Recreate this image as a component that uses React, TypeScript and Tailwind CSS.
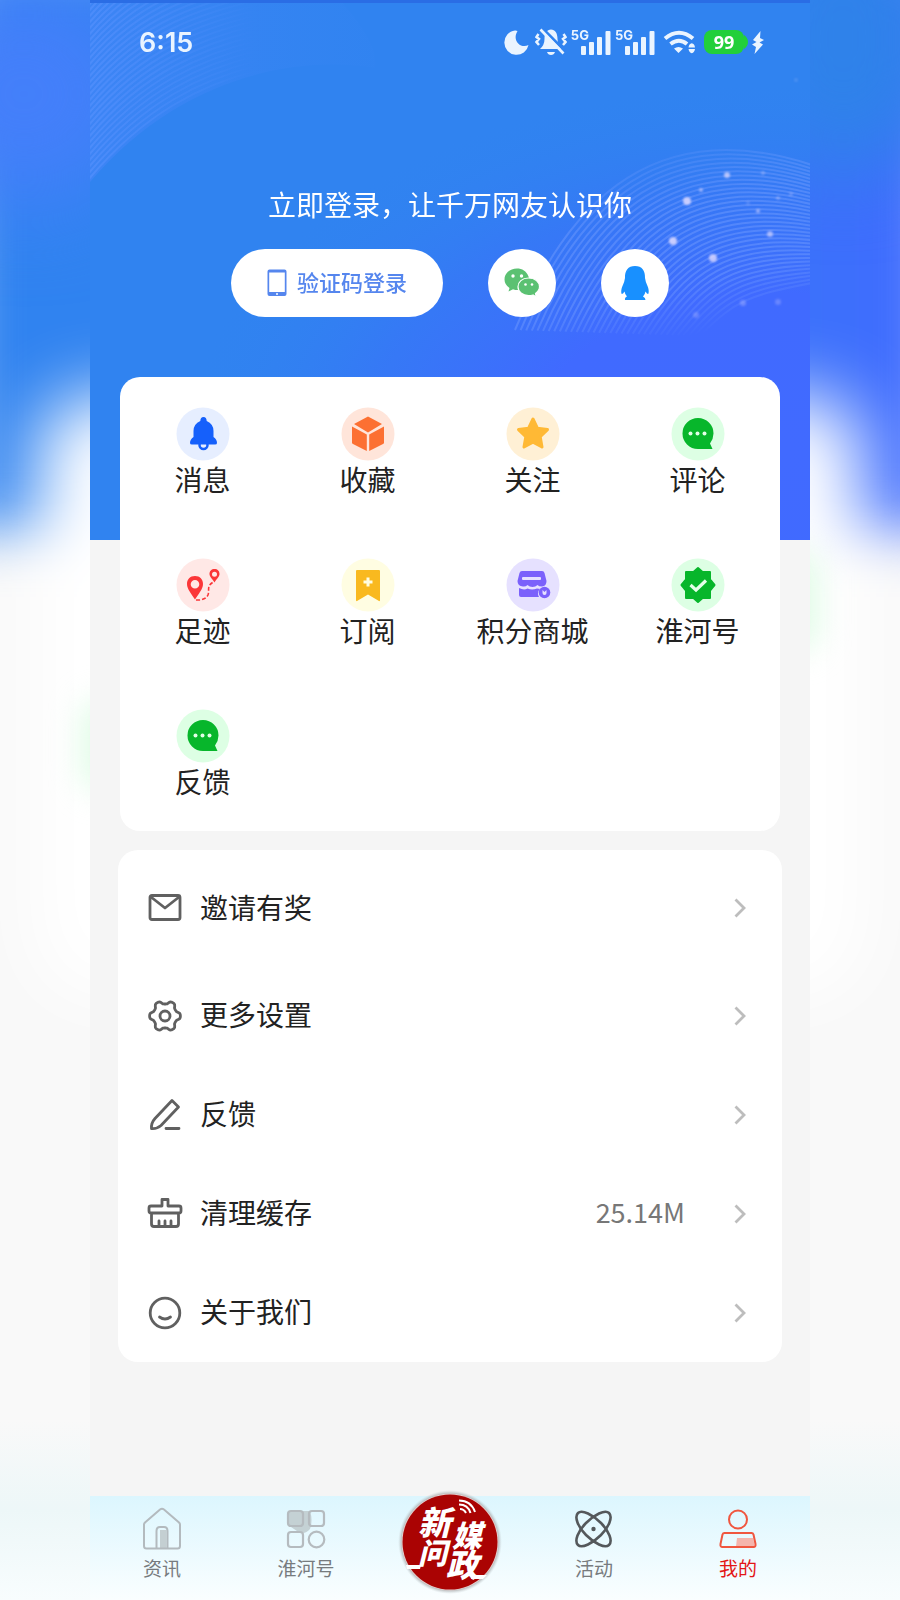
import type { ReactNode } from 'react';

const leftArcs = Array.from({ length: 30 }, (_, i) => i);
const rightArcs = Array.from({ length: 34 }, (_, i) => i / 33);
const sparks = [
  [727, 175, 3, 0.75], [687, 201, 4, 0.85], [701, 190, 2, 0.6], [673, 241, 4, 0.85], [713, 258, 4, 0.8],
  [758, 211, 2, 0.6], [770, 234, 3, 0.65], [763, 173, 2, 0.35], [778, 198, 2, 0.35], [791, 194, 2, 0.3],
  [743, 303, 3, 0.3], [778, 302, 3, 0.25], [696, 315, 3, 0.25], [748, 203, 2, 0.2], [796, 80, 2, 0.15],
];

const gearPath =
  Array.from({ length: 72 }, (_, i) => {
    const a = (i * Math.PI) / 36;
    const wave = Math.tanh(1.8 * Math.cos(6 * a)) / Math.tanh(1.8);
    const r = 13.7 + 1.7 * wave;
    return `${i ? 'L' : 'M'}${(18 + r * Math.cos(a)).toFixed(2)} ${(18 + r * Math.sin(a)).toFixed(2)}`;
  }).join('') + 'Z';

function HeaderArt() {
  return (
    <svg className="absolute inset-0 h-full w-full" viewBox="0 0 720 540" preserveAspectRatio="none" aria-hidden="true">
      <defs>
        <radialGradient id="glow" gradientUnits="userSpaceOnUse" cx="690" cy="450" r="600" gradientTransform="translate(690 450) scale(1 0.62) translate(-690 -450)">
          <stop offset="0" stopColor="#416aff" />
          <stop offset="0.42" stopColor="#406aff" />
          <stop offset="0.7" stopColor="#3776f7" stopOpacity="0.8" />
          <stop offset="1" stopColor="#3083f0" stopOpacity="0" />
        </radialGradient>
        <linearGradient id="fadeL" x1="0" y1="0" x2="1" y2="0">
          <stop offset="0" stopColor="#fff" />
          <stop offset="1" stopColor="#fff" stopOpacity="0" />
        </linearGradient>
        <linearGradient id="fadeR" gradientUnits="userSpaceOnUse" x1="560" y1="130" x2="610" y2="335">
          <stop offset="0" stopColor="#fff" stopOpacity="0.15" />
          <stop offset="0.4" stopColor="#fff" stopOpacity="0.8" />
          <stop offset="0.75" stopColor="#fff" stopOpacity="0.8" />
          <stop offset="1" stopColor="#fff" stopOpacity="0" />
        </linearGradient>
        <linearGradient id="fillL" x1="0" y1="0" x2="1" y2="0">
          <stop offset="0" stopColor="#4a86fb" />
          <stop offset="1" stopColor="#3a86f4" stopOpacity="0.2" />
        </linearGradient>
        <mask id="maskL"><rect width="170" height="190" fill="url(#fadeL)" /></mask>
        <mask id="maskR"><rect width="720" height="540" fill="url(#fadeR)" /></mask>
        <filter id="soft"><feGaussianBlur stdDeviation="1" /></filter>
      </defs>
      <rect width="720" height="540" fill="#3083f0" />
      <rect width="720" height="540" fill="url(#glow)" />
      <path d="M0 0H250Q290 45 285 68C210 55 90 75 0 182Z" fill="url(#fillL)" opacity="0.5" />
      <g mask="url(#maskL)" fill="none" stroke="#5c94ff" strokeWidth="2" opacity="0.5">
        {leftArcs.map((i) => (
          <path key={i} d={`M-2 ${180 - i * 6}C50 ${118 - i * 6} 110 ${80 - i * 5} 190 ${66 - i * 5}`} />
        ))}
      </g>
      <g mask="url(#maskR)" fill="none" stroke="#7ba2ff" strokeWidth="2" opacity="0.5">
        {rightArcs.map((t) => (
          <path
            key={t}
            d={`M${425 + 185 * t} ${330 + 6 * t}C${480 + 165 * t} ${195 + 105 * t} ${570 + 90 * t} ${115 + 180 * t} 722 ${165 + 118 * t}`}
          />
        ))}
      </g>
      <g fill="#e2dcff" filter="url(#soft)">
        {sparks.map(([x, y, r, o]) => <circle key={`${x}-${y}`} cx={x - 90} cy={y} r={r} opacity={o} />)}
      </g>
      <rect width="720" height="3" fill="#2a6de5" />
    </svg>
  );
}

function Signal() {
  return (
    <svg width="30" height="24" viewBox="0 0 30 24" className="mt-0.5" fill="#eaf4ff" aria-hidden="true">
      <rect x="0" y="15" width="5" height="9" rx="1" />
      <rect x="8" y="11" width="5" height="13" rx="1" />
      <rect x="16" y="6" width="5" height="18" rx="1" />
      <rect x="24.500" y="0" width="5" height="24" rx="1" />
    </svg>
  );
}

function StatusBar() {
  return (
    <div className="flex h-[84px] items-center justify-between pr-[46px] pl-[49px] font-['Inter',sans-serif]">
      <span className="pt-0.5 text-[27px] font-semibold text-[#eaf4ff]">6:15</span>
      <div className="flex items-center">
        <svg width="25" height="25" viewBox="0 0 25 25" aria-hidden="true">
          <path d="M11 0.500A12.200 12.200 0 1 0 24.500 15C17 19 7.500 11 13.500 1Q12 .3 11 .5Z" fill="#eaf4ff" />
        </svg>
        <svg width="32" height="28" viewBox="0 0 32 28" className="ml-1.5" aria-hidden="true">
          <path d="M5 21Q9.500 17 9.500 11C9.500 5 12 1.500 16 1.500S22.500 5 22.500 11Q22.500 17 27 21ZM12 24H20Q19 27 16 27T12 24Z" fill="#eaf4ff" />
          <path d="M3.500 6L1.500 9L4 11L1.500 14L4 17M28.500 6L30.500 9L28 11L30.500 14L28 17" stroke="#eaf4ff" strokeWidth="2.500" fill="none" />
          <path d="M8 1L30 23" stroke="#3083f0" strokeWidth="3" />
          <path d="M5.500 1.500L28.500 25.500" stroke="#eaf4ff" strokeWidth="2.600" />
        </svg>
        <div className="ml-1 flex">
          <span className="-mr-2 text-[13px] leading-3 font-bold text-[#eaf4ff]">5G</span>
          <Signal />
        </div>
        <div className="ml-1 flex">
          <span className="-mr-2 text-[13px] leading-3 font-bold text-[#eaf4ff]">5G</span>
          <Signal />
        </div>
        <svg width="33" height="24" viewBox="0 0 33 24" className="ml-2" fill="none" aria-hidden="true">
          <path d="M2 8.500Q16 -3 30 8.500M7.500 14Q16 7.500 24 14" stroke="#eaf4ff" strokeWidth="4" />
          <path d="M11 18.500Q15.500 15.500 20 18.500L15.500 23ZM25.500 17.500Q26 13.500 28.800 13.200Q31.500 13.500 32 17.500ZM25.500 19H32Q31.500 22.500 28.800 23.200Q26 22.500 25.500 19Z" fill="#eaf4ff" />
        </svg>
        <span className="ml-2 flex h-6 w-[40px] items-center justify-center rounded-[8px] bg-[#22cf3a] font-['Noto_Sans',sans-serif] text-[18px] font-bold text-white">99</span>
        <svg width="4" height="14" viewBox="0 0 4 14" aria-hidden="true"><path d="M0 0Q4 3 4 7T0 14Z" fill="#22cf3a" /></svg>
        <svg width="12" height="23" viewBox="0 0 12 23" className="ml-1" aria-hidden="true">
          <path d="M8.500 0L1 9L4.500 11L0 13.500L4 16L2.500 23L11 13.500L7.500 11.500L12 9L8 7Z" fill="#eaf4ff" />
        </svg>
      </div>
    </div>
  );
}

function Wechat() {
  return (
    <svg width="36" height="30" viewBox="0 0 36 30" aria-hidden="true">
      <path d="M13 0.500C5.500 .5 .5 5.500 .5 11.500Q.5 16.500 5.500 20L4.500 23.500L9 21.200Q12 22.300 15 22C26 21 26.500 14 24.500 8.500C22.500 3 18 .5 13 .5Z" fill="#5bc172" />
      <path d="M24.500 10C18 10 14 14 14 18.800S18.500 27.600 24.500 27.600Q27 27.600 29 27L32.300 29L31.500 25.500Q35.500 22.500 35.500 18.800C35.500 14 31 10 24.500 10Z" fill="#5bc172" stroke="#fff" strokeWidth="1.200" />
      <g fill="#fff"><circle cx="9" cy="8" r="1.700" /><circle cx="17.500" cy="8" r="1.700" /><circle cx="21.500" cy="16.500" r="1.300" /><circle cx="28" cy="16.500" r="1.300" /></g>
    </svg>
  );
}

function Penguin() {
  return (
    <svg width="28" height="34" viewBox="0 0 28 34" aria-hidden="true">
      <path d="M14 0C7 0 3.700 4.500 4 12Q3.500 16 1.500 20C0 23.500 0 27 .8 28Q2 28 3.500 25.500Q4 28.500 6 30.500Q3.500 31.500 4 34H24.500Q24.500 31.500 22 30.500Q24 28.500 24.500 25.500Q26 28 27.200 28C28 27 28 23.500 26.500 20Q24.500 16 24 12C24.300 4.500 21 0 14 0Z" fill="#1890ff" />
    </svg>
  );
}

const chat = (
  <>
    <path d="M27 11A15.500 15.500 0 1 0 27 42H41.500L39 36.500Q42.500 31.500 42.500 26.500A15.500 15.500 0 0 0 27 11Z" fill="#07b62b" />
    <g fill="#e2ffe8"><circle cx="19.500" cy="26.500" r="2" /><circle cx="26.500" cy="26.500" r="2" /><circle cx="33.500" cy="26.500" r="2" /></g>
  </>
);

const services: { label: string; tint: string; art: ReactNode }[] = [
  {
    label: '消息', tint: '#e6eeff',
    art: (
      <>
        <circle cx="27.500" cy="38" r="4" fill="none" stroke="#1560fb" strokeWidth="2.500" />
        <path d="M27.500 10Q30.500 10 30.700 14Q37.500 17 37.500 24V30Q41 32.500 41 36Q41 37.500 39 37.500H16Q14 37.500 14 36Q14 32.500 17.500 30V24Q17.500 17 24.300 14Q24.500 10 27.500 10Z" fill="#1560fb" />
      </>
    ),
  },
  {
    label: '收藏', tint: '#ffe5da',
    art: <path d="M27 9.500L41 17L27 25.500L13 17ZM11 19.500L25.800 27.500V44L12 37Q11 36.500 11 35.500ZM43 19.500L28.200 27.500V44L42 37Q43 36.500 43 35.500Z" fill="#fc7032" />,
  },
  {
    label: '关注', tint: '#fff0d5',
    art: <path d="M27 12L31.400 21.200L41.500 22.600L34.200 29.800L36 40L27 35.200L18 40L19.800 29.800L12.500 22.600L22.600 21.200Z" fill="#ffb935" stroke="#ffb935" strokeWidth="3" strokeLinejoin="round" />,
  },
  { label: '评论', tint: '#ddffe4', art: chat },
  {
    label: '足迹', tint: '#ffe8e6',
    art: (
      <g fill="#fb3638">
        <path fillRule="evenodd" d="M19 18C14 18 11 21.500 11 26C11 31 15.500 36 19 41.500C22.500 36 27 31 27 26C27 21.500 24 18 19 18ZM19 22A4.300 4.300 0 1 1 19 30.600A4.300 4.300 0 0 1 19 22Z" />
        <path fillRule="evenodd" d="M38.500 11C35.500 11 33.500 13 33.500 16C33.500 19 36.500 21 38.500 24.500C40.500 21 43.500 19 43.500 16C43.500 13 41.500 11 38.500 11ZM38.500 13.800A2.500 2.500 0 1 1 38.500 18.800A2.500 2.500 0 0 1 38.500 13.800Z" />
        <path d="M20 42C27 42.500 32 40 32.500 35C33 31 31 27.500 37.500 24" fill="none" stroke="#fb3638" strokeWidth="1.600" strokeDasharray="4 2" />
      </g>
    ),
  },
  {
    label: '订阅', tint: '#fffde2',
    art: (
      <>
        <path d="M16 12H38Q39 12 39 13V42Q39 43.500 38 43L27 36.500L16 43Q15 43.500 15 42V13Q15 12 16 12Z" fill="#f9b91f" />
        <path d="M27 19.500V28.500M22.500 24H31.500" stroke="#fffde2" strokeWidth="3" />
      </>
    ),
  },
  {
    label: '积分商城', tint: '#e6e1ff',
    art: (
      <>
        <path d="M16 13H36Q38 13 38.500 15L40.500 23Q40.500 28 36 28.500Q33 28.500 31.500 27Q29.500 29 26.500 29Q23.500 29 21.500 27Q19.500 29 17 28.500Q11.500 28 11.500 23L13.500 15Q14 13 16 13ZM13 30Q18 32.500 21.500 30.500Q26 32.500 31 30.500L34 31Q30.500 34.500 33 39H15Q13 39 13 37Z" fill="#7b61fb" />
        <rect x="16" y="19" width="19" height="3" rx="1" fill="#e6e1ff" />
        <circle cx="38.500" cy="34.500" r="5.800" fill="#7b61fb" />
        <path d="M36.500 32V35Q36.500 37 38.500 37T40.500 35V32L38.500 34Z" fill="#e6e1ff" />
      </>
    ),
  },
  {
    label: '淮河号', tint: '#ddffe4',
    art: (
      <>
        <path d="M27 10L31.500 14H39V21.500L43.500 27L39 32.500V40H31.500L27 44L22.500 40H15V32.500L10.500 27L15 21.500V14H22.500Z" fill="#07b62b" stroke="#07b62b" strokeWidth="2" strokeLinejoin="round" />
        <path d="M19.500 27L25 32L35 22.500" fill="none" stroke="#e4ffe9" strokeWidth="3.200" />
      </>
    ),
  },
  { label: '反馈', tint: '#ddffe4', art: chat },
];

const settings: { label: string; value?: string; art: ReactNode }[] = [
  {
    label: '邀请有奖',
    art: <path d="M5 5.500H31Q33 5.500 33 7.500V27.500Q33 29.500 31 29.500H5Q3 29.500 3 27.500V7.500Q3 5.500 5 5.500ZM4 7L18 18L32 7" />,
  },
  {
    label: '更多设置',
    art: (
      <>
        <circle cx="18" cy="18" r="5" />
        <path d={gearPath} />
      </>
    ),
  },
  {
    label: '反馈',
    art: <path d="M25 3.500L31.500 10L14 28.500Q10 32 4.500 31.500Q4 26 8 21.500ZM19 31.500H32" />,
  },
  {
    label: '清理缓存', value: '25.14M',
    art: <path d="M15 10V3.500H21V10H32Q34 10 34 12V15Q34 17 32 17H4Q2 17 2 15V12Q2 10 4 10ZM4.500 17V28Q4.500 30.500 7 30.500H29Q31.500 30.500 31.500 28V17M12 30V25M18 30V25M24 30V25" />,
  },
  {
    label: '关于我们',
    art: (
      <>
        <circle cx="18" cy="18" r="14.800" />
        <path d="M12.500 22Q18 26 23.500 22" />
      </>
    ),
  },
];

function Logo() {
  return (
    <svg width="104" height="104" viewBox="0 0 104 104" className="-mt-[6px] shrink-0" aria-hidden="true">
      <defs>
        <radialGradient id="halo"><stop offset="0.900" stopColor="#8b8b8b" /><stop offset="1" stopColor="#c8d2d5" stopOpacity="0" /></radialGradient>
      </defs>
      <circle cx="52" cy="52" r="52" fill="url(#halo)" />
      <circle cx="52" cy="52" r="48.500" fill="#e3cfcf" />
      <circle cx="52" cy="52" r="47.500" fill="#aa0303" />
      <g fill="#fff" fontFamily="'Noto Sans CJK SC', sans-serif" fontWeight="900" fontStyle="italic">
        <text x="20" y="45" fontSize="33">新</text>
        <text x="54" y="57" fontSize="30">媒</text>
        <text x="20" y="74" fontSize="29">问</text>
        <text x="48" y="87" fontSize="32">政</text>
      </g>
      <path d="M8 75H23L22 79H9ZM74 85H89L85 89H73Z" fill="#fff" />
      <path d="M62 19Q66 19 68 23M61 14.500Q70 14.500 72.500 23M61 10.500Q73 10.500 77 22" fill="none" stroke="#fff" strokeWidth="2" />
    </svg>
  );
}

const tabs: { label: string; color: string; art: ReactNode }[] = [
  {
    label: '资讯', color: 'text-[#777b7e]',
    art: (
      <>
        <path d="M18 24H24.500V42H18Z" fill="#c4cfd2" />
        <path d="M3 16.500L18 3.500Q20 2 22 3.500L37 16.500Q38 17.500 38 18.500V40Q38 42.500 35.500 42.500H4.500Q2 42.500 2 40V18.500Q2 17.500 3 16.500ZM14.500 42V25Q14.500 21 18 21H22Q25.500 21 25.500 25V42" fill="none" stroke="#b3babe" strokeWidth="2" />
      </>
    ),
  },
  {
    label: '淮河号', color: 'text-[#777b7e]',
    art: (
      <>
        <path d="M2 5H24Q27 14 24 23Q18 30 11 25L2 19Z" fill="#c4d1d4" />
        <g fill="none" stroke="#b5bbbf" strokeWidth="2.200"><rect x="2" y="5" width="15" height="15" rx="3" /><rect x="23" y="5" width="15" height="15" rx="3" /><rect x="2" y="26" width="15" height="15" rx="3" /><circle cx="30.500" cy="33.500" r="7.800" /></g>
      </>
    ),
  },
  { label: '', color: '', art: null },
  {
    label: '活动', color: 'text-[#777b7e]',
    art: (
      <g fill="none" stroke="#54585b" strokeWidth="2.600">
        <path d="M4 7C8 3 19 9 27 17S39 35 35 39S20 37 12 29S0 11 4 7Z" />
        <path d="M35 7C31 3 20 9 12 17S0 35 4 39S19 37 27 29S39 11 35 7Z" />
        <circle cx="19.500" cy="23" r="2.200" fill="#54585b" stroke="none" />
      </g>
    ),
  },
  {
    label: '我的', color: 'text-[#e31616]',
    art: (
      <>
        <path d="M19 32H35L37 40.500H18Z" fill="#f5b4ac" />
        <g fill="none" stroke="#f0563f" strokeWidth="2"><circle cx="20" cy="13.500" r="9" /><path d="M6.500 27H33.500Q35 27 35.500 28.500L37.500 38Q38 41 35.500 41H4.500Q2 41 2.500 38L4.500 28.500Q5 27 6.500 27Z" /></g>
      </>
    ),
  },
];

function Backdrop() {
  return (
    <div className="absolute inset-0 overflow-hidden bg-[#f9f9f9]" aria-hidden="true">
      <div className="absolute -inset-x-10 -top-10 h-[570px] bg-linear-to-r from-[#3083f0] via-[#3083f0] to-[#406aff] blur-[28px]" />
      <div className="absolute -top-4 -left-24 h-[220px] w-[240px] rounded-full bg-[#447ffa] blur-[44px]" />
      <div className="absolute -top-24 -right-12 h-[270px] w-[210px] rounded-full bg-[#2f82ea] blur-[40px]" />
      <div className="absolute inset-x-[36px] top-[395px] h-[600px] rounded-[60px] bg-white blur-[36px]" />
      <div className="absolute top-[700px] left-[84px] h-[90px] w-10 rounded-full bg-[#dcfbe3] blur-[16px]" />
      <div className="absolute top-[550px] right-[84px] h-[100px] w-10 rounded-full bg-[#dcfbe3] blur-[16px]" />
      <div className="absolute inset-x-0 bottom-0 h-[180px] bg-linear-to-b from-[#f5f8f800] via-[#edf7f8] to-[#f8fdfe]" />
    </div>
  );
}

export default function App() {
  return (
    <div className="relative min-h-screen font-['Noto_Sans_CJK_SC',sans-serif]">
      <Backdrop />
      <div className="relative mx-auto flex min-h-screen w-4/5 flex-col bg-[#f5f5f5]">
        <header className="relative pb-[223px]">
          <HeaderArt />
          <div className="relative">
            <StatusBar />
            <h1 className="mt-[100px] text-center text-[28px] leading-10 font-normal text-white">立即登录，让千万网友认识你</h1>
            <div className="mt-[25px] flex justify-center gap-[45px]">
              <button className="flex h-[68px] w-[212px] items-center justify-center gap-2.5 rounded-full bg-white text-[22px] font-medium text-[#5586ee]">
                <svg width="20" height="28" viewBox="0 0 20 28" aria-hidden="true">
                  <path fillRule="evenodd" d="M2.500 .5H17.500Q19.500 .5 19.500 2.500V25Q19.500 27 17.500 27H2.500Q.5 27 .5 25V2.500Q.5 .5 2.500 .5ZM2.200 3.500V23H17.800V3.500Z" fill="#5586ee" />
                  <circle cx="10" cy="25" r="1" fill="#fff" />
                </svg>
                <span className="pb-1">验证码登录</span>
              </button>
              <button aria-label="微信登录" className="flex size-[68px] items-center justify-center rounded-full bg-white"><Wechat /></button>
              <button aria-label="QQ登录" className="flex size-[68px] items-center justify-center rounded-full bg-white"><Penguin /></button>
            </div>
          </div>
        </header>

        <main className="relative -mt-[163px] flex-1 pb-10">
          <section className="mx-[30px] grid grid-cols-4 gap-y-[61px] rounded-[20px] bg-white pt-[30px] pb-8">
            {services.map((s, i) => (
              <a key={i} href="#" className="flex flex-col items-center text-[28px] leading-9 whitespace-nowrap text-[#222]">
                <svg width="54" height="54" viewBox="0 0 54 54" aria-hidden="true">
                  <circle cx="27" cy="27" r="26.500" fill={s.tint} />
                  {s.art}
                </svg>
                {s.label}
              </a>
            ))}
          </section>

          <section className="mx-7 mt-[19px] rounded-[20px] bg-white">
            {settings.map((s) => (
              <a key={s.label} href="#" className="flex h-[99px] items-center pr-9 pl-[29px] text-[28px] text-[#222] first:h-[116px]">
                <svg width="36" height="36" viewBox="0 0 36 36" fill="none" stroke="#606060" strokeWidth="2.800" strokeLinejoin="round" strokeLinecap="round" aria-hidden="true">{s.art}</svg>
                <span className="ml-[17px] pb-[3px]">{s.label}</span>
                {s.value && <span className="ml-auto pb-0.5 text-[27px] text-[#777]">{s.value}</span>}
                <svg width="12" height="20" viewBox="0 0 12 20" className={s.value ? 'ml-[49px]' : 'ml-auto'} aria-hidden="true">
                  <path d="M1.500 1.500L10 10L1.500 18.500" fill="none" stroke="#bdbdbd" strokeWidth="2.800" />
                </svg>
              </a>
            ))}
          </section>
        </main>

        <nav className="relative grid h-[104px] grid-cols-5 bg-linear-to-b from-[#dcf6fe] to-[#fafeff]">
          {tabs.map((t, i) =>
            t.art ? (
              <a key={i} href="#" className={`flex flex-col items-center gap-0.5 pt-[10px] text-[19px] leading-7 ${t.color}`}>
                <svg width="40" height="46" viewBox="0 0 40 46" aria-hidden="true">{t.art}</svg>
                {t.label}
              </a>
            ) : (
              <a key={i} href="#" aria-label="新媒问政" className="flex items-start justify-center"><Logo /></a>
            ),
          )}
        </nav>
      </div>
    </div>
  );
}
